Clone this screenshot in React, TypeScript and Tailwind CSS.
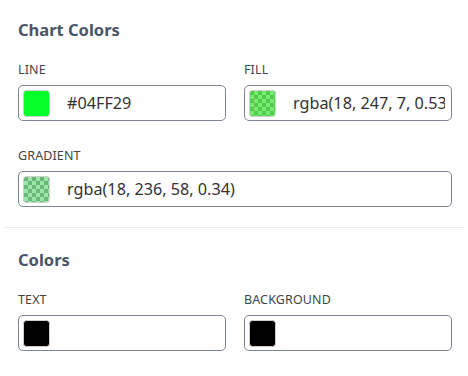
import React from 'react';

type Swatch = { color: string; checker?: boolean };

function ColorSwatch({ color, checker }: Swatch) {
  const id = 'chk-' + color.replace(/[^a-z0-9]/gi, '');
  return (
    <svg width="27" height="27" viewBox="0 0 27 27" className="shrink-0">
      <defs>
        <pattern id={id} x="1" y="1" width="8" height="8" patternUnits="userSpaceOnUse">
          <rect width="8" height="8" fill="#e2e2e2" />
          <rect width="4" height="4" fill="#999999" />
          <rect x="4" y="4" width="4" height="4" fill="#999999" />
        </pattern>
      </defs>
      <rect x="0.5" y="0.5" width="26" height="26" rx="3" fill={checker ? `url(#${id})` : '#fff'} />
      <rect x="0.5" y="0.5" width="26" height="26" rx="3" fill={color} stroke="#d0d0d0" />
    </svg>
  );
}

function ColorField({ label, value, color, checker }: { label: string; value?: string; color: string; checker?: boolean }) {
  return (
    <div>
      <div className="text-[12.5px] leading-[16px] text-[#444] tracking-[0.01em] mb-[7px]">{label}</div>
      <div className="h-[36px] flex items-center border border-[#7d8693] rounded-[5px] pl-[4px] pr-[6px] overflow-hidden bg-white">
        <ColorSwatch color={color} checker={checker} />
        {value && (
          <span className="ml-[17px] text-[16.2px] text-[#333] whitespace-nowrap overflow-hidden min-w-0">{value}</span>
        )}
      </div>
    </div>
  );
}

export default function App() {
  return (
    <div className="w-[468px] h-[376px] bg-white font-['Noto_Sans',sans-serif] overflow-hidden">
      {/* Chart Colors */}
      <section className="pl-[18px] pr-[16px] pt-[18px] pb-[20px]">
        <h2 className="text-[16.5px] leading-[24px] font-bold text-[#4a5568] mb-[20px]">Chart Colors</h2>
        <div className="grid grid-cols-2 gap-x-[18px] gap-y-[27px]">
          <ColorField label="LINE" value="#04FF29" color="#04FF29" />
          <ColorField label="FILL" value="rgba(18, 247, 7, 0.53)" color="rgba(18, 247, 7, 0.53)" checker />
          <div className="col-span-2">
            <ColorField label="GRADIENT" value="rgba(18, 236, 58, 0.34)" color="rgba(18, 236, 58, 0.34)" checker />
          </div>
        </div>
      </section>

      <div className="mx-[4px] border-t border-[#ebebeb]" />

      {/* Colors */}
      <section className="pl-[18px] pr-[16px] pt-[20px]">
        <h2 className="text-[16.5px] leading-[24px] font-bold text-[#4a5568] mb-[20px]">Colors</h2>
        <div className="grid grid-cols-2 gap-x-[18px]">
          <ColorField label="TEXT" color="#000000" />
          <ColorField label="BACKGROUND" color="#000000" />
        </div>
      </section>
    </div>
  );
}
